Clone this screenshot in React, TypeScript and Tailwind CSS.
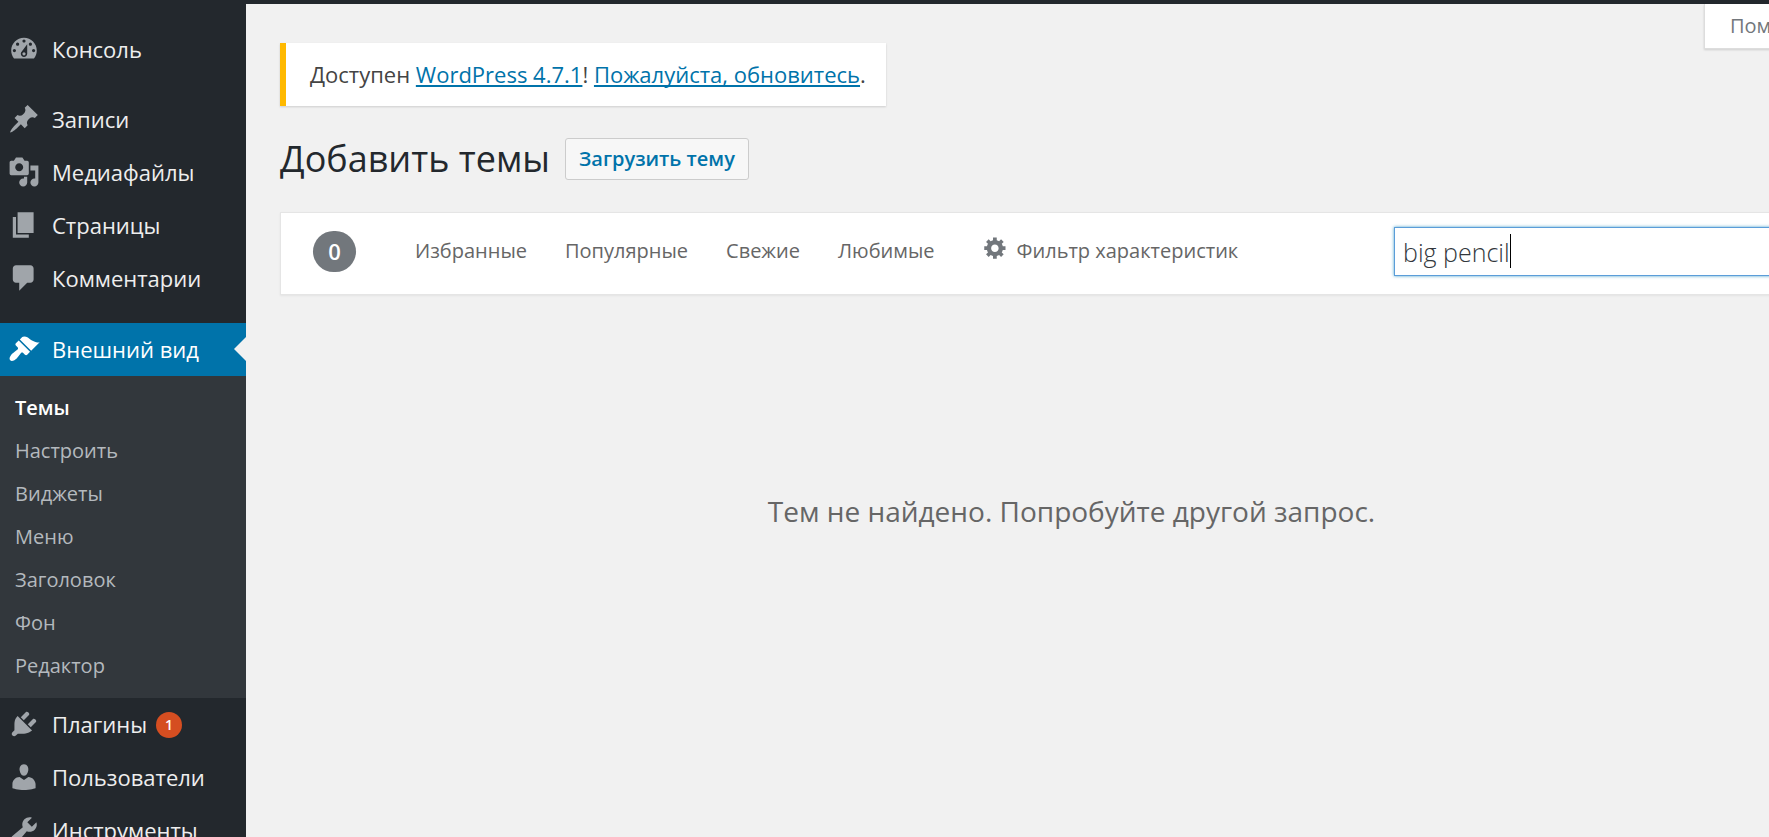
import React from "react";

type IconName =
  | "dashboard" | "post" | "media" | "page" | "comments"
  | "appearance" | "plugins" | "users" | "tools" | "generic";

const ICONS: Record<IconName, string> = {
  dashboard:
    "M3.76 16h12.48c1.1-1.37 1.76-3.11 1.76-5 0-4.42-3.58-8-8-8s-8 3.58-8 8c0 1.89.66 3.63 1.76 5zM10 4c.55 0 1 .45 1 1s-.45 1-1 1-1-.45-1-1 .45-1 1-1zM6 6c.55 0 1 .45 1 1s-.45 1-1 1-1-.45-1-1 .45-1 1-1zm8 0c.55 0 1 .45 1 1s-.45 1-1 1-1-.45-1-1 .45-1 1-1zm-5.37 5.55L12 7v6c0 1.1-.9 2-2 2s-2-.9-2-2c0-.57.24-1.08.63-1.45zM4 10c.55 0 1 .45 1 1s-.45 1-1 1-1-.45-1-1 .45-1 1-1zm12 0c.55 0 1 .45 1 1s-.45 1-1 1-1-.45-1-1 .45-1 1-1zm-5 3c0-.55-.45-1-1-1s-1 .45-1 1 .45 1 1 1 1-.45 1-1z",
  post:
    "M10.44 3.02l1.82-1.82 6.36 6.35-1.83 1.82c-1.05-.68-2.48-.57-3.41.36l-.75.75c-.92.93-1.04 2.35-.35 3.41l-1.83 1.82-2.41-2.41-2.8 2.79c-.42.42-3.38 2.71-3.8 2.29s1.86-3.39 2.28-3.81l2.79-2.79L4.1 9.36l1.83-1.82c1.05.69 2.48.57 3.4-.36l.75-.75c.93-.92 1.05-2.35.36-3.41z",
  media:
    "M13 11V4c0-.55-.45-1-1-1h-1.67L9 1H5L3.67 3H2c-.55 0-1 .45-1 1v7c0 .55.45 1 1 1h10c.55 0 1-.45 1-1zM7 4.5c1.38 0 2.5 1.12 2.5 2.5S8.38 9.5 7 9.5 4.5 8.38 4.5 7 5.62 4.5 7 4.5zM14 6h5v10.5c0 1.38-1.12 2.5-2.5 2.5S14 17.88 14 16.5s1.12-2.5 2.5-2.5c.17 0 .34.02.5.05V9h-3V6zm-4 8.05V13h2v3.5c0 1.38-1.12 2.5-2.5 2.5S7 17.88 7 16.5 8.12 14 9.5 14c.17 0 .34.02.5.05z",
  page: "M6 15V2h10v13H6zm-1 1h8v2H3V5h2v11z",
  comments:
    "M5 2h9c1.1 0 2 .9 2 2v7c0 1.1-.9 2-2 2h-2l-5 5v-5H5c-1.1 0-2-.9-2-2V4c0-1.1.9-2 2-2z",
  appearance:
    "M14.48 11.06L7.41 3.99l1.5-1.5c.5-.56 2.3-.47 3.51.32 1.21.8 1.43 1.28 2.91 2.1 1.18.64 2.45 1.26 4.45.85zm-.71.71L6.7 4.7 4.93 6.47c-.39.39-.39 1.02 0 1.41l1.06 1.06c.39.39.39 1.03 0 1.42-.6.6-1.43 1.11-2.21 1.69-.35.26-.7.53-1.01.84C1.43 14.23.4 16.08 1.4 17.07c.99 1 2.84-.03 4.18-1.36.31-.31.58-.66.85-1.02.57-.78 1.08-1.61 1.69-2.21.39-.39 1.02-.39 1.41 0l1.06 1.06c.39.39 1.02.39 1.41 0z",
  plugins:
    "M13.11 4.36L9.87 7.6 8 5.73l3.24-3.24c.35-.34 1.05-.2 1.56.32.52.51.66 1.21.31 1.55zm-8 1.77l.91-1.12 9.01 9.01-1.19.84c-.71.71-2.63 1.16-3.82 1.16H6.14L4.9 17.26c-.59.59-1.54.59-2.12 0-.59-.58-.59-1.53 0-2.12l1.24-1.24v-3.88c0-1.13.4-3.19 1.09-3.89zm7.26 3.97l3.24-3.24c.34-.35 1.04-.21 1.55.31.52.51.66 1.21.31 1.55l-3.24 3.25z",
  users:
    "M10 9.25c-2.27 0-2.73-3.44-2.73-3.44C7 4.02 7.82 2 9.97 2c2.16 0 2.98 2.02 2.71 3.81 0 0-.41 3.44-2.68 3.44zm0 2.57L12.72 10c2.39 0 4.52 2.33 4.52 4.53v2.49s-3.65 1.13-7.24 1.13c-3.65 0-7.24-1.13-7.24-1.13v-2.49c0-2.25 1.94-4.48 4.47-4.48z",
  tools:
    "M16.68 9.77c-1.34 1.34-3.3 1.67-4.95.99l-5.41 6.52c-.99.99-2.59.99-3.58 0s-.99-2.59 0-3.57l6.52-5.42c-.68-1.65-.35-3.61.99-4.95 1.28-1.28 3.12-1.62 4.72-1.06l-2.89 2.89 2.82 2.82 2.86-2.87c.53 1.58.18 3.39-1.08 4.65zM3.81 16.21c.4.39 1.04.39 1.43 0 .4-.4.4-1.04 0-1.43-.39-.4-1.03-.4-1.43 0-.39.39-.39 1.03 0 1.43z",
  generic:
    "M18 12h-2.18c-.17.7-.44 1.35-.81 1.93l1.54 1.54-2.1 2.1-1.54-1.54c-.58.36-1.23.63-1.91.79V19H8v-2.18c-.68-.16-1.33-.43-1.91-.79l-1.54 1.54-2.12-2.12 1.54-1.54c-.36-.58-.63-1.23-.79-1.91H1V9.03h2.17c.16-.7.44-1.35.8-1.94L2.43 5.55l2.1-2.1 1.54 1.54c.58-.37 1.24-.64 1.93-.81V2h3v2.18c.68.16 1.33.43 1.91.79l1.54-1.54 2.12 2.12-1.54 1.54c.36.59.64 1.24.8 1.94H18V12zm-8.5 1.5c1.66 0 3-1.34 3-3s-1.34-3-3-3-3 1.34-3 3 1.34 3 3 3z",
};

function Icon({ name, className }: { name: IconName; className: string }) {
  return (
    <svg viewBox="0 0 20 20" fill="currentColor" fillRule="evenodd" aria-hidden="true" className={className}>
      <path d={ICONS[name]} />
    </svg>
  );
}

function MenuItem({ icon, label, badge }: { icon: IconName; label: string; badge?: number }) {
  return (
    <li>
      <a href="#" className="flex h-[53px] items-center gap-3 pl-2 text-[22px] text-[#eee]">
        <Icon name={icon} className="mb-px size-8 shrink-0 text-[#a0a5aa]" />
        <span>{label}</span>
        {badge !== undefined && (
          <span className="-ml-[3px] flex size-[26px] items-center justify-center rounded-full bg-[#d54e21] text-sm font-semibold text-white">
            {badge}
          </span>
        )}
      </a>
    </li>
  );
}

const SUBMENU = ["Темы", "Настроить", "Виджеты", "Меню", "Заголовок", "Фон", "Редактор"];
const FILTERS = ["Избранные", "Популярные", "Свежие", "Любимые"];

function Sidebar() {
  return (
    <nav aria-label="Главное меню" className="w-[246px] shrink-0 bg-[#23282d] pt-[19px]">
      <ul>
        <MenuItem icon="dashboard" label="Консоль" />
        <li aria-hidden="true" className="h-[17px]" />
        <MenuItem icon="post" label="Записи" />
        <MenuItem icon="media" label="Медиафайлы" />
        <MenuItem icon="page" label="Страницы" />
        <MenuItem icon="comments" label="Комментарии" />
        <li aria-hidden="true" className="h-[18px]" />
        <li>
          <a href="#" className="relative flex h-[53px] items-center gap-3 bg-[#0073aa] pl-2 text-[22px] text-white">
            <Icon name="appearance" className="mb-px size-8 shrink-0" />
            <span>Внешний вид</span>
            <span className="absolute right-0 top-1/2 -mt-[13px] border-y-12 border-r-12 border-y-transparent border-r-[#f1f1f1]" />
          </a>
          <ul className="bg-[#32373c] pb-[11px] pt-2.5 text-xl">
            {SUBMENU.map((item, i) => (
              <li key={item}>
                <a
                  href="#"
                  className={
                    i === 0
                      ? "block pl-[15px] leading-[43px] font-semibold text-white"
                      : "block pl-[15px] leading-[43px] text-[#b4b9be]"
                  }
                >
                  {item}
                </a>
              </li>
            ))}
          </ul>
        </li>
        <MenuItem icon="plugins" label="Плагины" badge={1} />
        <MenuItem icon="users" label="Пользователи" />
        <MenuItem icon="tools" label="Инструменты" />
      </ul>
    </nav>
  );
}

export default function App() {
  return (
    <div className="flex h-screen flex-col overflow-hidden bg-[#f1f1f1] font-['Open_Sans','Noto_Sans',sans-serif]">
      <header className="h-1 shrink-0 bg-[#23282d]" />
      <div className="flex min-h-0 flex-1">
        <Sidebar />
        <main className="-mr-[94px] min-w-0 flex-1 pl-[34px]">
          <div className="flex items-start justify-between">
            <p className="mt-[39px] flex h-[63px] items-center border-l-6 border-[#ffb900] bg-white pl-6 pr-5 text-[22px] text-[#444] shadow-[0_1px_2px_rgba(0,0,0,0.15)]">
              <span>
                Доступен{" "}
                <a href="#" className="text-[#0073aa] underline [text-decoration-skip-ink:none]">WordPress 4.7.1</a>!{" "}
                <a href="#" className="text-[#0073aa] underline [text-decoration-skip-ink:none]">Пожалуйста, обновитесь</a>.
              </span>
            </p>
            <button className="h-[45px] w-[159px] border border-t-0 border-[#ddd] bg-white pl-[25px] text-left text-xl text-[#72777c] shadow-[0_1px_2px_rgba(0,0,0,0.15)]">
              Помощь
            </button>
          </div>

          <div className="mt-8 flex h-[42px] items-center gap-[15px]">
            <h1 className="text-4xl text-[#23282d]">Добавить темы</h1>
            <button className="h-[42px] rounded-[3px] border border-[#ccc] bg-[#f7f7f7] px-[13px] text-xl font-semibold text-[#0073aa]">
              Загрузить тему
            </button>
          </div>

          <div className="mt-8 flex h-[83px] items-center border border-[#e5e5e5] bg-white pb-1 pl-8 pr-[29px] text-xl text-[#666] shadow-[0_1px_2px_rgba(0,0,0,0.06)]">
            <span className="flex h-[41px] w-[43px] items-center justify-center rounded-full bg-[#72777c] text-[22px] font-semibold text-white">
              0
            </span>
            <ul className="ml-[59px] flex gap-[38px] pb-0.5">
              {FILTERS.map((item) => (
                <li key={item}>
                  <a href="#">{item}</a>
                </li>
              ))}
            </ul>
            <button className="ml-12 flex items-center gap-[9px] pb-0.5">
              <Icon name="generic" className="mb-1.5 size-[25px] text-[#72777c]" />
              Фильтр характеристик
            </button>
            <div className="relative ml-auto w-[439px]">
              <input
                type="text"
                aria-label="Поиск тем"
                defaultValue="big pencil"
                className="block h-[49px] w-full border border-[#5b9dd9] bg-white px-2 text-[25px] font-light text-[#32373c] shadow-[0_0_3px_rgba(30,140,190,0.8)] outline-none"
              />
              <span aria-hidden="true" className="absolute left-[116px] top-[7px] h-[34px] w-px bg-black" />
            </div>
          </div>

          <p className="mt-[195px] text-center text-[28px] text-[#666]">Тем не найдено. Попробуйте другой запрос.</p>
        </main>
      </div>
    </div>
  );
}
